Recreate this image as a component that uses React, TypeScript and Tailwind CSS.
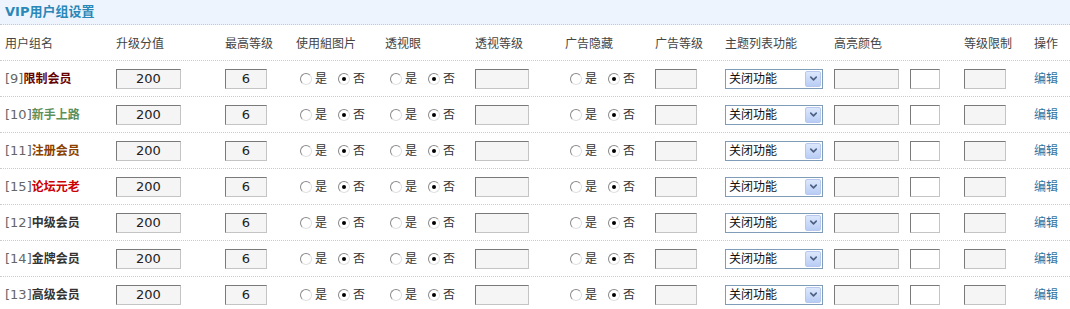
import { ChevronDown } from 'lucide-react'

type Group = { id: number; name: string; color: string }

const groups: Group[] = [
  { id: 9, name: '限制会员', color: 'text-[#660000]' },
  { id: 10, name: '新手上路', color: 'text-[#5b8f5b]' },
  { id: 11, name: '注册会员', color: 'text-[#8a4000]' },
  { id: 15, name: '论坛元老', color: 'text-[#cc0000]' },
  { id: 12, name: '中级会员', color: 'text-[#333333]' },
  { id: 14, name: '金牌会员', color: 'text-[#333333]' },
  { id: 13, name: '高级会员', color: 'text-[#333333]' },
]

const headers = [
  '用户组名',
  '升级分值',
  '最高等级',
  '使用組图片',
  '透视眼',
  '透视等级',
  '广告隐藏',
  '广告等级',
  '主题列表功能',
  '高亮颜色',
  '等级限制',
  '操作',
]

const cols =
  'grid grid-cols-[116px_109px_71px_89px_90px_90px_90px_70px_109px_129px_71px_1fr] items-center'

function Box({ w, value, white }: { w: string; value?: string; white?: boolean }) {
  return (
    <div
      className={`${w} h-[20px] border border-t-[#7a7a7a] border-l-[#7a7a7a] border-b-[#c4c4c4] border-r-[#c4c4c4] ${
        white ? 'bg-white' : 'bg-[#f5f5f5]'
      } flex items-center justify-center text-[13px] text-[#222] leading-none`}
    >
      {value}
    </div>
  )
}

function Radio({ checked }: { checked?: boolean }) {
  return (
    <span className="w-[12px] h-[12px] rounded-full border border-t-[#8a8a8a] border-l-[#8a8a8a] border-b-[#e0e0e0] border-r-[#e0e0e0] bg-white flex items-center justify-center">
      {checked && <span className="w-[4px] h-[4px] rounded-full bg-black" />}
    </span>
  )
}

function YesNo() {
  return (
    <div className="flex items-center pl-[4px] text-[12px] text-[#333]">
      <Radio />
      <span className="ml-[3px]">是</span>
      <span className="ml-[11px]">
        <Radio checked />
      </span>
      <span className="ml-[3px]">否</span>
    </div>
  )
}

function Select() {
  return (
    <div className="w-[98px] h-[20px] border border-[#7f9db9] bg-white flex items-center justify-between">
      <span className="pl-[3px] text-[12px] text-[#111]">关闭功能</span>
      <span className="w-[16px] h-[16px] mr-[1px] rounded-[2px] border border-[#b6c8ef] bg-gradient-to-b from-[#dce7fb] to-[#b9cdf5] flex items-center justify-center">
        <ChevronDown size={11} strokeWidth={3.5} className="text-[#4d6185]" />
      </span>
    </div>
  )
}

export default function App() {
  return (
    <div className="w-[1070px] h-[309px] overflow-hidden bg-white font-['DejaVu_Sans','Noto_Sans_CJK_SC',sans-serif] text-[12px] text-[#333]">
      <div className="h-[25px] bg-[#eef4fd] border-b border-dotted border-[#c8c8c8] pl-[5px] pt-[2px]">
        <span className="font-bold text-[13px] text-[#2a88b8]">VIP用户组设置</span>
      </div>

      <div className={`${cols} h-[36px] pt-[2px] border-b border-dotted border-[#cccccc] text-[#444]`}>
        {headers.map((h, i) => (
          <div key={h} className={i === 0 ? 'pl-[5px]' : i === 10 ? 'pl-[1px]' : ''}>
            {h}
          </div>
        ))}
      </div>

      {groups.map((g) => (
        <div key={g.id} className={`${cols} h-[36px] border-b border-dotted border-[#cccccc]`}>
          <div className="pl-[5px] text-[13px] whitespace-nowrap">
            <span className="text-[#666]">[{g.id}]</span>
            <span className={`font-bold text-[12px] ${g.color}`}>{g.name}</span>
          </div>
          <Box w="w-[65px]" value="200" />
          <Box w="w-[42px]" value="6" />
          <YesNo />
          <div className="pl-[1px]">
            <YesNo />
          </div>
          <Box w="w-[54px]" />
          <div className="pl-[1px]">
            <YesNo />
          </div>
          <Box w="w-[42px]" />
          <Select />
          <div className="flex items-center gap-[11px]">
            <Box w="w-[65px]" />
            <Box w="w-[30px]" white />
          </div>
          <div className="pl-[1px]">
            <Box w="w-[42px]" />
          </div>
          <div className="text-[#33729e] text-[12px]">编辑</div>
        </div>
      ))}
    </div>
  )
}
